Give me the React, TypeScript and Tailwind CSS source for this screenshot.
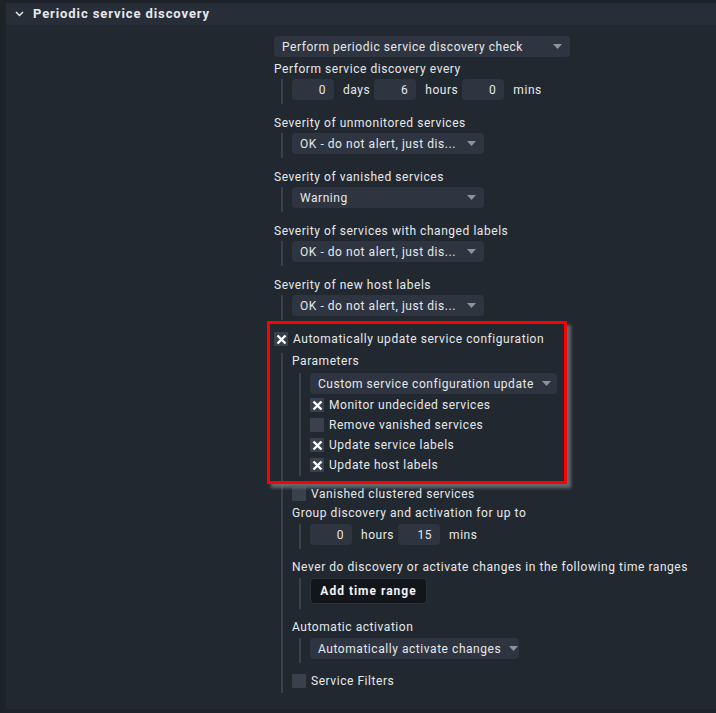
import React from 'react';

const LINE = 'border-l-2 border-[#3a414b] ml-[7px] pl-[9px]';

const Arrow = () => (
  <svg width="9" height="5" viewBox="0 0 9 5" className="shrink-0">
    <path d="M0 0 L9 0 L4.5 5 Z" fill="#8d939b" />
  </svg>
);

const Select = ({ text, w }: { text: string; w: string }) => (
  <div className={`h-[21px] ${w} rounded bg-[#2e3540] flex items-center pl-2 pr-[8px] gap-2`}>
    <span className="flex-1 whitespace-nowrap leading-4">{text}</span>
    <Arrow />
  </div>
);

const Label = ({ children, className = '' }: { children: React.ReactNode; className?: string }) => (
  <div className={`h-4 leading-4 whitespace-nowrap ${className}`}>{children}</div>
);

const Box = ({ checked }: { checked?: boolean }) => (
  <div className="w-[14px] h-[14px] bg-[#39414c] rounded-[1px] flex items-center justify-center shrink-0">
    {checked && (
      <svg width="11" height="11" viewBox="0 0 11 11">
        <path d="M1.5 1.5 L9.5 9.5 M9.5 1.5 L1.5 9.5" stroke="#ffffff" strokeWidth="2.4" />
      </svg>
    )}
  </div>
);

const Check = ({ text, checked, className = '' }: { text: string; checked?: boolean; className?: string }) => (
  <div className={`flex items-center gap-[5px] whitespace-nowrap ${className}`}>
    <Box checked={checked} />
    <span className="leading-4">{text}</span>
  </div>
);

const Num = ({ v }: { v: string }) => (
  <div className="w-[42px] h-[21px] rounded bg-[#2e3540] flex items-center justify-end pr-2">{v}</div>
);

const Unit = ({ t }: { t: string }) => <span className="ml-[9px] mr-[4px]">{t}</span>;

export default function App() {
  return (
    <div className="relative w-[716px] h-[713px] bg-[#1e2229] pt-[3px] pl-[6px] pb-[4px] flex flex-col font-[Roboto,sans-serif] text-[12px] tracking-[0.55px] text-[#e6e8eb] overflow-hidden">
      <div className="flex-1 bg-[#222830] flex flex-col">
        {/* Header */}
        <div className="h-[22px] bg-[#282e38] flex items-center">
          <svg width="9" height="6" viewBox="0 0 9 6" className="ml-[9px]">
            <path d="M1 1 L4.5 4.5 L8 1" stroke="#e6e8eb" strokeWidth="1.5" fill="none" />
          </svg>
          <span className="ml-[9px] font-bold text-[13px] tracking-[0.9px]">Periodic service discovery</span>
        </div>

        {/* Body */}
        <div className="pl-[268px] pt-[11px] flex flex-col items-start">
          <Select text="Perform periodic service discovery check" w="w-[296px]" />

          <Label className="mt-1">Perform service discovery every</Label>
          <div className={`${LINE} mt-[2px] pb-1 flex items-center`}>
            <Num v="0" />
            <Unit t="days" />
            <Num v="6" />
            <Unit t="hours" />
            <Num v="0" />
            <Unit t="mins" />
          </div>

          {[
            ['Severity of unmonitored services', 'OK - do not alert, just dis...'],
            ['Severity of vanished services', 'Warning'],
            ['Severity of services with changed labels', 'OK - do not alert, just dis...'],
            ['Severity of new host labels', 'OK - do not alert, just dis...'],
          ].map(([l, v]) => (
            <React.Fragment key={l}>
              <Label className="mt-[11px]">{l}</Label>
              <div className={`${LINE} mt-[2px] pb-1`}>
                <Select text={v} w="w-[192px]" />
              </div>
            </React.Fragment>
          ))}

          <Check text="Automatically update service configuration" checked className="h-4 mt-[11px]" />

          <div className={`${LINE} mt-[6px] pb-1 flex flex-col items-start`}>
            <Label>Parameters</Label>
            <div className={`${LINE} mt-1 pb-px flex flex-col items-start`}>
              <Select text="Custom service configuration update" w="w-[247px]" />
              <div className="mt-px flex flex-col">
                <Check text="Monitor undecided services" checked className="h-5" />
                <Check text="Remove vanished services" className="h-5" />
                <Check text="Update service labels" checked className="h-5" />
                <Check text="Update host labels" checked className="h-5" />
              </div>
            </div>

            <Check text="Vanished clustered services" className="h-5 mt-[8px]" />
            <Label className="mt-px">Group discovery and activation for up to</Label>
            <div className={`${LINE} mt-[3px] pb-1 flex items-center`}>
              <Num v="0" />
              <Unit t="hours" />
              <Num v="15" />
              <Unit t="mins" />
            </div>

            <Label className="mt-[10px]">Never do discovery or activate changes in the following time ranges</Label>
            <div className={`${LINE} mt-[3px] pb-[5px]`}>
              <button className="w-[117px] h-[26px] rounded bg-[#12161b] border border-[#2c323a] font-bold tracking-[1px] text-[#f2f3f5]">
                Add time range
              </button>
            </div>

            <Label className="mt-[10px]">Automatic activation</Label>
            <div className={`${LINE} mt-[3px] pb-1`}>
              <Select text="Automatically activate changes" w="w-[209px]" />
            </div>

            <Check text="Service Filters" className="h-4 mt-[10px]" />
          </div>
        </div>
      </div>

      {/* red highlight annotation */}
      <div className="absolute left-[267px] top-[321px] w-[300px] h-[163px] border-[3px] border-[#ff0000] shadow-[4px_4px_3px_rgba(120,124,130,0.75)] pointer-events-none" />
    </div>
  );
}
